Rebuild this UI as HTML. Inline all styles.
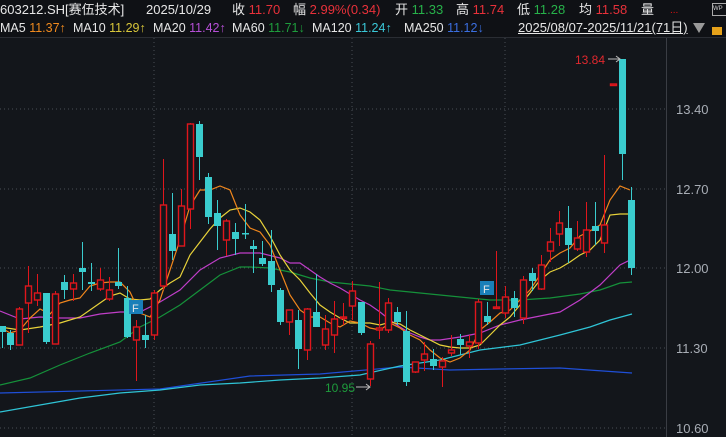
<!DOCTYPE html>
<html><head><meta charset="utf-8"><style>
*{margin:0;padding:0}
body{width:726px;height:437px;background:#13161b;overflow:hidden;font-family:"Liberation Sans","Noto Sans CJK SC",sans-serif;position:relative}
.r1{position:absolute;left:0;top:0;width:726px;height:19px;background:#0f1115;font-size:13px;line-height:19px;color:#e6e6e6;white-space:nowrap}
.r2{position:absolute;left:0;top:19px;width:726px;height:18px;background:#0f1115;font-size:12.5px;line-height:18px;color:#e6e6e6;white-space:nowrap;border-bottom:1px solid #2a2d33}
span{position:absolute}
.red{color:#e8313a}.grn{color:#27b24a}
</style></head><body>
<div class="r1">
<span style="left:0">603212.SH[赛伍技术]</span>
<span style="left:146px">2025/10/29</span>
<span style="left:232px">收 <b class="red" style="font-weight:normal">11.70</b></span>
<span style="left:293px">幅 <b class="red" style="font-weight:normal">2.99%(0.34)</b></span>
<span style="left:395px">开 <b class="grn" style="font-weight:normal">11.33</b></span>
<span style="left:456px">高 <b class="red" style="font-weight:normal">11.74</b></span>
<span style="left:517px">低 <b class="grn" style="font-weight:normal">11.28</b></span>
<span style="left:579px">均 <b class="red" style="font-weight:normal">11.58</b></span>
<span style="left:641px">量</span>
<span style="left:670px;color:#e01010;font-size:10px;top:1px">...</span>
<span style="left:712px;top:3px;width:14px;height:11px;border:1px solid #aaa;font-size:6px;line-height:10px;color:#ccc">WP</span>
</div>
<div class="r2">
<span style="left:0">MA5 <b style="font-weight:normal;color:#f08a1e">11.37↑</b></span>
<span style="left:73px">MA10 <b style="font-weight:normal;color:#d8c63a">11.29↑</b></span>
<span style="left:153px">MA20 <b style="font-weight:normal;color:#b54fd6">11.42↑</b></span>
<span style="left:232px">MA60 <b style="font-weight:normal;color:#1e9c3c">11.71↓</b></span>
<span style="left:312px">MA120 <b style="font-weight:normal;color:#3ac8d8">11.24↑</b></span>
<span style="left:404px">MA250 <b style="font-weight:normal;color:#3b6fe0">11.12↓</b></span>
<span style="left:518px;text-decoration:underline;font-size:13px">2025/08/07-2025/11/21(71日)</span>
<span style="left:693px;top:4px;width:0;height:0;border-left:6px solid transparent;border-right:6px solid transparent;border-top:10px solid #999"></span>
<span style="left:712px;top:8px;width:10px;height:8px;background:#e6a21a"></span>
</div>
<svg width="726" height="437" style="position:absolute;left:0;top:0" xmlns="http://www.w3.org/2000/svg">
<g stroke="#4a4e56" stroke-dasharray="1,3" stroke-width="1">
<line x1="0" y1="109" x2="666" y2="109"/><line x1="0" y1="189" x2="666" y2="189"/><line x1="0" y1="268" x2="666" y2="268"/><line x1="0" y1="348" x2="666" y2="348"/><line x1="0" y1="428" x2="666" y2="428"/>
<line x1="154" y1="38" x2="154" y2="437"/><line x1="352" y1="38" x2="352" y2="437"/><line x1="505" y1="38" x2="505" y2="437"/>
</g>
<line x1="666.5" y1="38" x2="666.5" y2="437" stroke="#3a3d44"/>
<g font-size="13" fill="#a8adb5" font-family="Liberation Sans,sans-serif">
<text x="676" y="114">13.40</text><text x="676" y="194">12.70</text><text x="676" y="273">12.00</text><text x="676" y="353">11.30</text><text x="676" y="433">10.60</text>
</g>
<g fill="none" stroke-width="1.2">
<polyline stroke="#1f4fd8" points="0,393 160,389 250,376 320,374 400,367 450,370 500,369 560,368 632,373"/>
<polyline stroke="#2fc4d6" points="0,412 40,405 80,398 120,393 160,390 200,385 240,383 280,380 320,378 360,375 400,366 440,360 480,350 520,345 560,335 590,327 610,320 632,314"/>
<polyline stroke="#15913a" points="0,385 30,378 60,365 90,353 120,342 140,327 160,317 180,305 200,290 220,275 240,267 250,267 270,268 290,272 310,278 330,282 350,284 370,286 390,290 410,292 430,294 460,297 490,300 520,300 550,298 580,294 600,290 620,283 632,282"/>
<polyline stroke="#c03ec8" points="0,311 20,319 40,317 60,318 80,318 100,314 120,312 140,312 160,302 180,290 200,270 220,258 240,253 260,253 280,258 290,263 300,263 310,270 320,277 330,283 340,288 350,294 360,300 370,305 380,312 390,320 400,327 410,333 420,337 430,340 440,340 460,337 480,333 500,325 520,320 540,316 560,312 580,300 600,285 620,265 630,260"/>
<polyline stroke="#e8d23a" points="0,327 20,330 40,327 60,323 80,317 100,303 110,296 120,293 130,299 140,300 150,299 160,290 170,283 180,277 190,255 200,242 210,229 220,218 230,210 240,208 250,212 260,220 270,236 280,255 290,270 300,280 310,293 320,305 330,312 340,318 350,323 360,323 370,323 380,325 390,322 400,324 410,330 420,335 430,340 440,345 450,347 460,348 470,348 480,345 490,335 500,325 510,317 520,305 530,293 540,280 550,272 560,268 570,262 580,255 590,250 600,240 610,215 620,214 630,214"/>
<polyline stroke="#f0861c" points="0,327 10,333 20,330 30,318 40,309 50,314 60,303 70,300 80,298 90,286 100,283 110,282 120,282 130,292 140,313 150,317 160,300 170,270 180,240 190,206 200,190 210,190 220,186 230,190 240,215 250,228 260,232 270,245 280,270 290,295 300,310 310,317 320,317 330,323 340,327 350,321 360,323 370,328 380,330 390,323 400,328 410,335 420,340 430,350 440,358 450,362 460,358 470,350 480,330 490,322 500,313 510,310 520,300 530,290 540,275 550,260 560,253 570,248 580,236 590,231 600,225 610,200 620,186 630,190"/>
</g>
<g id="c"></g>
<rect x="129" y="300" width="14" height="14" fill="#1a7fb8"/><text x="132" y="312" font-size="11" fill="#e6e6e6" font-family="Liberation Sans,sans-serif">F</text>
<rect x="480" y="281" width="14" height="14" fill="#1a7fb8"/><text x="483" y="293" font-size="11" fill="#e6e6e6" font-family="Liberation Sans,sans-serif">F</text>
<text x="575" y="64" font-size="12" fill="#e0282e" font-family="Liberation Sans,sans-serif">13.84</text>
<path d="M608 59H620M616 56l4 3-4 3" stroke="#bbb" fill="none"/>
<text x="325" y="392" font-size="12" fill="#1e9c3c" font-family="Liberation Sans,sans-serif">10.95</text>
<path d="M356 387H370M366 384l4 3-4 3" stroke="#bbb" fill="none"/>
</svg>
<script>
var d=[[2,'c',326,332,326,348],[10,'c',333,345,330,350],[19,'r',309,345,307,345],[28,'r',286,303,266,333],[37,'r',293,300,274,306],[46,'c',293,342,293,344],[55,'r',294,344,291,344],[64,'c',282,290,275,299],[73,'r',283,289,274,301],[82,'c',268,272,242,290],[91,'c',282,284,263,291],[100,'r',280,289,268,291],[109,'r',290,299,277,301],[118,'c',282,286,248,289],[127,'c',298,337,286,338],[136,'r',327,340,320,381],[145,'c',335,340,315,348],[154,'r',293,335,290,340],[163,'r',205,286,159,290],[172,'c',234,251,193,260],[181,'r',206,246,189,229],[190,'r',124,209,123,229],[199,'c',124,157,121,180],[208,'c',177,217,173,224],[217,'c',213,226,200,250],[226,'r',221,240,219,256],[235,'c',232,239,223,255],[245,'c',233,234,204,239],[253,'c',246,249,240,273],[262,'c',258,264,241,266],[271,'c',261,285,230,292],[280,'c',290,322,288,325],[289,'r',310,322,310,335],[298,'c',320,349,310,369],[307,'r',309,350,308,360],[316,'c',312,327,274,327],[325,'r',329,345,315,350],[334,'r',319,335,301,353],[343,'r',317,318,303,325],[352,'r',291,306,281,320],[361,'c',302,333,302,335],[370,'r',344,379,341,386],[379,'r',328,330,282,339],[388,'r',303,330,298,333],[397,'c',312,322,307,325],[406,'c',331,382,311,386],[415,'r',362,372,362,373],[424,'r',354,360,342,371],[433,'c',359,366,349,370],[442,'r',361,367,357,387],[451,'r',350,353,335,356],[460,'c',339,345,334,355],[469,'r',342,346,335,358],[478,'r',302,343,299,349],[487,'c',316,322,302,325],[496,'r',307,308,251,309],[505,'r',297,313,286,318],[514,'c',298,308,291,317],[523,'r',280,318,276,324],[532,'c',273,281,268,291],[541,'r',265,289,255,290],[550,'r',242,251,228,262],[559,'r',223,234,211,246],[568,'c',228,245,206,263],[577,'r',238,249,221,251],[586,'r',230,252,202,257],[595,'c',226,231,202,245],[604,'r',225,243,155,253],[613,'r',84,85,84,85],[622,'c',59,154,59,180],[631,'c',200,268,187,275]];
var s='';d.forEach(function(a){var x=a[0],t=a[1],col=t=='r'?'#e0161c':'#3accce';
s+='<line x1="'+(x+.5)+'" y1="'+a[4]+'" x2="'+(x+.5)+'" y2="'+a[5]+'" stroke="'+col+'"/>';
var h=Math.max(a[3]-a[2],1.5);
if(t=='r')s+='<rect x="'+(x-2.5)+'" y="'+a[2]+'" width="6" height="'+h+'" fill="#13161b" stroke="'+col+'" stroke-width="1.4"/>';
else s+='<rect x="'+(x-3)+'" y="'+a[2]+'" width="7" height="'+h+'" fill="'+col+'"/>';});
document.getElementById('c').innerHTML=s;
</script>
</body></html>
